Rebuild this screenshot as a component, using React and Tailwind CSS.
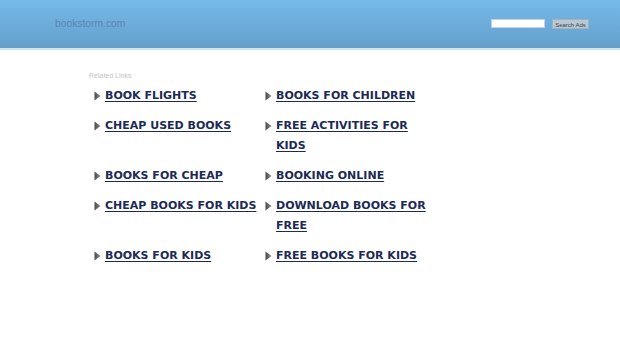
import React from 'react';

const links = [
  'BOOK FLIGHTS',
  'BOOKS FOR CHILDREN',
  'CHEAP USED BOOKS',
  'FREE ACTIVITIES FOR KIDS',
  'BOOKS FOR CHEAP',
  'BOOKING ONLINE',
  'CHEAP BOOKS FOR KIDS',
  'DOWNLOAD BOOKS FOR FREE',
  'BOOKS FOR KIDS',
  'FREE BOOKS FOR KIDS',
];

const Arrow = () => (
  <svg width="7" height="10" viewBox="0 0 7 10" className="mt-[5px] shrink-0">
    <defs>
      <linearGradient id="ag" x1="0" y1="0" x2="1" y2="0">
        <stop offset="0" stopColor="#4a4a4a" />
        <stop offset="1" stopColor="#8a8a8a" />
      </linearGradient>
    </defs>
    <path d="M0.5 0.5 L6.5 5 L0.5 9.5 Z" fill="url(#ag)" />
  </svg>
);

export default function App() {
  return (
    <div className="w-[620px] h-[343px] bg-white overflow-hidden" style={{ fontFamily: '"Liberation Sans", Arial, sans-serif' }}>
      <header className="h-[48px] bg-gradient-to-b from-[#75baea] to-[#649fcb] flex items-center justify-between pl-[55px] pr-[31px]">
        <div className="text-[10.3px] text-[#5f84b4] -mt-[1px]">bookstorm.com</div>
        <div className="flex items-center gap-[7px] -mt-[1px]">
          <input type="text" className="w-[54px] h-[9px] bg-white border border-[#c0d4e4] outline-none" />
          <button className="h-[10px] w-[37px] bg-[#b9c7d3] text-[6px] leading-[10px] text-[#444] border border-[#9fb2c2]">Search Ads</button>
        </div>
      </header>
      <div className="h-[2px] bg-[#cfe4f3]" />
      <main className="pl-[89px] pt-[21px]">
        <div className="text-[7px] text-[#c4c4c4] leading-[9px]">Related Links</div>
        <ul className="grid grid-cols-[171px_171px] gap-y-[10px] mt-[6px] pl-[5px]" style={{ fontFamily: '"DejaVu Sans", Verdana, sans-serif' }}>
          {links.map((t) => (
            <li key={t} className="flex gap-[4px]">
              <Arrow />
              <a href="#" className="text-[11px] leading-[20px] font-bold text-[#1c2a55] underline underline-offset-[2px] decoration-[1px]">
                {t}
              </a>
            </li>
          ))}
        </ul>
      </main>
    </div>
  );
}
